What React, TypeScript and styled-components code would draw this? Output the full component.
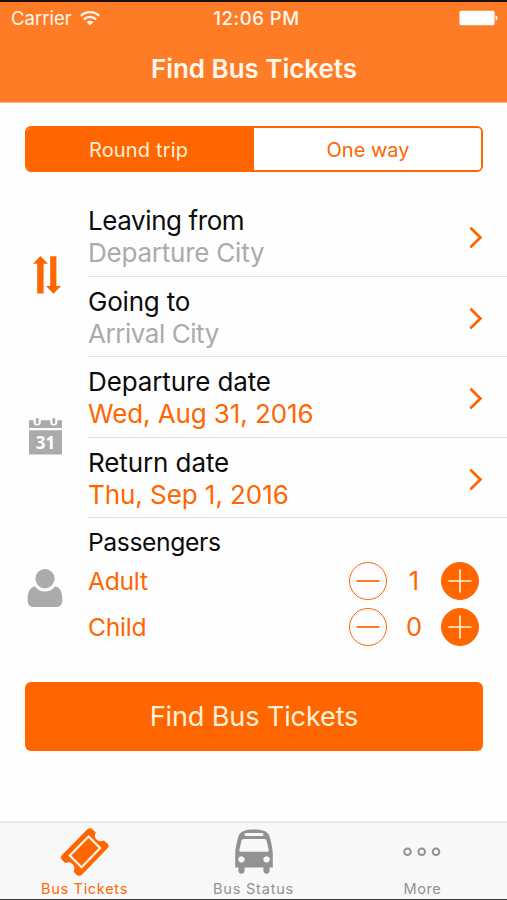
import React from "react";
import styled, { createGlobalStyle } from "styled-components";

const ORANGE = "#ff6600";
const GREY = "#ababab";
const TAB_GREY = "#929292";

const GlobalStyle = createGlobalStyle`
  * { box-sizing: border-box; }
  body { margin: 0; background: #fff; font-family: Inter, sans-serif; overflow: hidden; }
  button { font: inherit; border: 0; background: none; padding: 0; margin: 0; color: inherit; }
`;

const Screen = styled.div`
  display: flex;
  flex-direction: column;
  width: 507px;
  height: 900px;
  background: #fefefe;
  border-top: 2px solid #1c0d06;
  border-bottom: 1px solid #3a3a3e;
`;

const Header = styled.header`
  flex: none;
  height: 101px;
  background: #ff7c27;
  border-bottom: 1px solid #ffb488;
  color: #fff8ee;
`;

const StatusBar = styled.div`
  display: grid;
  grid-template-columns: 1fr auto 1fr;
  align-items: center;
  height: 32px;
  padding: 0 9px 0 11px;
`;

const Carrier = styled.div`
  display: flex;
  align-items: center;
  gap: 8px;
`;

const BatterySlot = styled.div`
  display: flex;
  justify-content: flex-end;
`;

const Text = styled.span<{ $size: number; $weight?: number; $track?: number; $color?: string; $line?: number }>`
  display: inline-block;
  white-space: nowrap;
  font-size: ${(p) => p.$size}px;
  font-weight: ${(p) => p.$weight ?? 400};
  letter-spacing: ${(p) => p.$track ?? 0}px;
  color: ${(p) => p.$color ?? "inherit"};
  line-height: ${(p) => (p.$line ? `${p.$line}px` : "normal")};
`;

const Clock = styled(Text)`
  padding-left: 4px;
`;

const TitleBar = styled.div`
  display: flex;
  align-items: center;
  justify-content: center;
  height: 68px;
  padding-left: 1px;
`;

const Segments = styled.div`
  flex: none;
  display: grid;
  grid-template-columns: 1fr 1fr;
  height: 46px;
  margin: 23px 24px 0 25px;
  border: 2px solid ${ORANGE};
  border-radius: 6px;
  overflow: hidden;
`;

const Segment = styled.button<{ $active?: boolean }>`
  background: ${(p) => (p.$active ? ORANGE : "#fff")};
  color: ${(p) => (p.$active ? "#fff0d8" : ORANGE)};
  padding: 2px ${(p) => (p.$active ? 4 : 0)}px 0 ${(p) => (p.$active ? 0 : 1)}px;
`;

const Form = styled.main`
  flex: none;
  margin-top: 24px;
`;

const Group = styled.section`
  display: grid;
  grid-template-columns: 88px 1fr;
`;

const IconCell = styled.div<{ $drop?: number; $lift?: number; $shift?: number }>`
  display: flex;
  align-items: center;
  justify-content: center;
  padding: ${(p) => p.$drop ?? 0}px 0 ${(p) => p.$lift ?? 0}px ${(p) => p.$shift ?? 2}px;
`;

const Row = styled.div`
  display: flex;
  align-items: center;
  justify-content: space-between;
  height: 80.6px;
  padding: 3px 24px 0 0;
  border-bottom: 1px solid #e2e2e4;
`;

const Labels = styled.div`
  display: flex;
  flex-direction: column;
  align-items: flex-start;
`;

const Passengers = styled.div`
  display: flex;
  flex-direction: column;
  padding: 9px 28px 0 0;
`;

const Counter = styled.div`
  display: grid;
  grid-template-columns: 1fr 38px 54px 38px;
  align-items: center;
  height: 46.4px;
`;

const Count = styled.div`
  text-align: center;
`;

const Round = styled.button<{ $filled?: boolean }>`
  display: grid;
  place-items: center;
  width: 38px;
  height: 38px;
  border-radius: 50%;
  border: 1.6px solid ${ORANGE};
  background: ${(p) => (p.$filled ? ORANGE : "transparent")};
  color: ${(p) => (p.$filled ? "#fff0d8" : ORANGE)};
`;

const Submit = styled.button`
  flex: none;
  height: 69px;
  margin: 32px 24px 0 25px;
  border-radius: 6px;
  background: ${ORANGE};
  color: #fff0d8;
`;

const TabBar = styled.nav`
  flex: none;
  display: grid;
  grid-template-columns: repeat(3, 1fr);
  height: 78px;
  margin-top: auto;
  background: #f8f8f8;
  border-top: 2px solid #ebebeb;
`;

const Tab = styled.button<{ $active?: boolean }>`
  display: flex;
  flex-direction: column;
  align-items: center;
  justify-content: space-between;
  padding: 4px 0 2px;
  color: ${(p) => (p.$active ? ORANGE : TAB_GREY)};
`;

const Wifi = () => (
  <svg width="20" height="15" viewBox="0 0 20 15" fill="none" stroke="currentColor" strokeWidth="2.3">
    <path d="M0.9 4.9a13 13 0 0 1 18.2 0" />
    <path d="M4 8.4a8.6 8.6 0 0 1 12 0" />
    <path d="M10 14.4 6.7 11.2a4.7 4.7 0 0 1 6.6 0Z" fill="currentColor" stroke="none" />
  </svg>
);

const Battery = () => (
  <svg width="39" height="16" viewBox="0 0 39 16" fill="#fff">
    <rect x="0.5" y="0.7" width="35" height="14.6" rx="1.6" />
    <path d="M36.6 5.2a3 3 0 0 1 0 5.6Z" />
  </svg>
);

const Chevron = () => (
  <svg width="14" height="22" viewBox="0 0 14 22" fill="none" stroke={ORANGE} strokeWidth="2.8" strokeLinecap="round" strokeLinejoin="miter">
    <path d="M2.2 2.6 11.4 11.6l-9.2 9" />
  </svg>
);

const Swap = () => (
  <svg width="28" height="38" viewBox="0 0 28 38" fill={ORANGE}>
    <path d="M7.4 0 15 7.8H10.6V37.6H4.2V7.8H0Z" />
    <path d="M17.2 0.2H23.4V30H28L20.4 37.8 13 30H17.2Z" />
  </svg>
);

const Calendar = () => (
  <svg width="33" height="37" viewBox="0 0 33 37" fill={GREY}>
    <path d="M0 2.2H4.6V4a3.6 3.6 0 0 0 7.2 0V2.2H21.2V4a3.6 3.6 0 0 0 7.2 0V2.2H33V10H0Z" />
    <rect x="6.8" y="0" width="2.8" height="6" rx="1.3" />
    <rect x="23.4" y="0" width="2.8" height="6" rx="1.3" />
    <path d="M0 12.2H33V36.6H0Z" />
    <text x="16.5" y="30.9" textAnchor="middle" fill="#fff" fontFamily="Open Sans, sans-serif" fontWeight="700" fontSize="17">31</text>
  </svg>
);

const Person = () => (
  <svg width="36" height="38" viewBox="0 0 36 38" fill={GREY}>
    <circle cx="18" cy="9.6" r="9.6" />
    <path d="M7.8 17.3A12.6 12.6 0 0 0 28.2 17.3C33.6 18.5 35.4 24 35.4 30.5C35.4 35.5 33.5 38 29 38H7C2.5 38 0.6 35.5 0.6 30.5C0.6 24 2.4 18.5 7.8 17.3Z" />
  </svg>
);

const Minus = () => (
  <svg width="24" height="24" viewBox="0 0 24 24" stroke="currentColor" strokeWidth="1.7">
    <path d="M0.5 12H23.5" />
  </svg>
);

const Plus = () => (
  <svg width="24" height="24" viewBox="0 0 24 24" stroke="currentColor" strokeWidth="1.7">
    <path d="M0.5 12H23.5M12 0.5V23.5" />
  </svg>
);

const Ticket = () => (
  <svg width="50" height="50" viewBox="0 -0.5 50 50">
    <path
      d="M27.6 1.6Q30 0 32.4 1.8L35.8 5Q33.6 9 36.2 11.8Q39.4 15 43.8 13L47.6 16.2Q49.8 18.4 47.8 20.6L22.4 46.8Q19.6 49.6 16.8 47.4L13.6 44.2Q15.6 40 12.8 36.8Q9.6 33.6 5.4 35.6L2 32.4Q-0.2 30 2 27.6Z"
      fill={ORANGE}
    />
    <path d="M28.6 9 40.2 20.6 21.6 39.8 9.8 28Z" fill="none" stroke="#fff3e6" strokeWidth="2.2" />
  </svg>
);

const Bus = () => (
  <svg width="38" height="47" viewBox="0 -2.4 38 47" fill={TAB_GREY}>
    <path
      fillRule="evenodd"
      d="M19 0C27 0 33 1.6 34.4 6.4C35.4 10 37.8 19 37.8 24V38H34.6V41.2A3 3 0 0 1 28.4 41.2V38H9.6V41.2A3 3 0 0 1 3.4 41.2V38H0.2V24C0.2 19 2.6 10 3.6 6.4C5 1.6 11 0 19 0ZM11 3.6A1.4 1.4 0 0 0 11 6.6H27A1.4 1.4 0 0 0 27 3.6ZM8.6 9.6Q6.8 9.6 6.4 11.4L4.4 20.4Q4 22.4 6 22.4H32Q34 22.4 33.6 20.4L31.6 11.4Q31.2 9.6 29.4 9.6ZM6.4 26.8A3.2 3.2 0 1 0 6.41 26.8ZM31.6 26.8A3.2 3.2 0 1 0 31.61 26.8Z"
    />
  </svg>
);

const Dots = () => (
  <svg width="42" height="50" viewBox="0 0 42 50" fill="none" stroke={TAB_GREY} strokeWidth="2">
    <circle cx="5.5" cy="24.8" r="3.3" />
    <circle cx="19.7" cy="24.8" r="3.3" />
    <circle cx="34" cy="24.8" r="3.3" />
  </svg>
);

type FieldProps = { label: string; value: string; filled?: boolean; labelTrack: number; valueTrack: number };

const Field = ({ label, value, filled, labelTrack, valueTrack }: FieldProps) => (
  <Row>
    <Labels>
      <Text $size={26} $line={32} $track={labelTrack} $color="#0c0c0c">{label}</Text>
      <Text $size={26} $line={32} $track={valueTrack} $color={filled ? ORANGE : GREY}>{value}</Text>
    </Labels>
    <Chevron />
  </Row>
);

const PassengerCount = ({ label, count }: { label: string; count: number }) => (
  <Counter>
    <Text $size={24.7} $track={-0.3} $color={ORANGE}>{label}</Text>
    <Round aria-label={`Fewer: ${label}`}><Minus /></Round>
    <Count><Text $size={25.5} $color={ORANGE}>{count}</Text></Count>
    <Round $filled aria-label={`More: ${label}`}><Plus /></Round>
  </Counter>
);

export default function App() {
  return (
    <>
      <GlobalStyle />
      <Screen>
        <Header>
          <StatusBar>
            <Carrier>
              <Text $size={18.5}>Carrier</Text>
              <Wifi />
            </Carrier>
            <Clock $size={18.5} $weight={500} $track={0.55}>12:06 PM</Clock>
            <BatterySlot><Battery /></BatterySlot>
          </StatusBar>
          <TitleBar>
            <Text $size={26} $weight={600} $track={-0.03}>Find Bus Tickets</Text>
          </TitleBar>
        </Header>
        <Segments>
          <Segment $active><Text $size={20} $track={0.15}>Round trip</Text></Segment>
          <Segment><Text $size={20}>One way</Text></Segment>
        </Segments>
        <Form>
          <Group>
            <IconCell $lift={4} $shift={5}><Swap /></IconCell>
            <div>
              <Field label="Leaving from" value="Departure City" labelTrack={-0.42} valueTrack={-0.23} />
              <Field label="Going to" value="Arrival City" labelTrack={-0.2} valueTrack={-0.45} />
            </div>
          </Group>
          <Group>
            <IconCell $lift={2}><Calendar /></IconCell>
            <div>
              <Field label="Departure date" value="Wed, Aug 31, 2016" filled labelTrack={-0.12} valueTrack={-0.1} />
              <Field label="Return date" value="Thu, Sep 1, 2016" filled labelTrack={-0.1} valueTrack={-0.06} />
            </div>
          </Group>
          <Group>
            <IconCell $drop={8}><Person /></IconCell>
            <Passengers>
              <Text $size={24.7} $line={30} $track={-0.4} $color="#0c0c0c">Passengers</Text>
              <PassengerCount label="Adult" count={1} />
              <PassengerCount label="Child" count={0} />
            </Passengers>
          </Group>
        </Form>
        <Submit><Text $size={27.2} $track={-0.2}>Find Bus Tickets</Text></Submit>
        <TabBar>
          <Tab $active><Ticket /><Text $size={14.5} $track={0.7}>Bus Tickets</Text></Tab>
          <Tab><Bus /><Text $size={14.5} $track={0.8}>Bus Status</Text></Tab>
          <Tab><Dots /><Text $size={14.5} $track={0.6}>More</Text></Tab>
        </TabBar>
      </Screen>
    </>
  );
}
